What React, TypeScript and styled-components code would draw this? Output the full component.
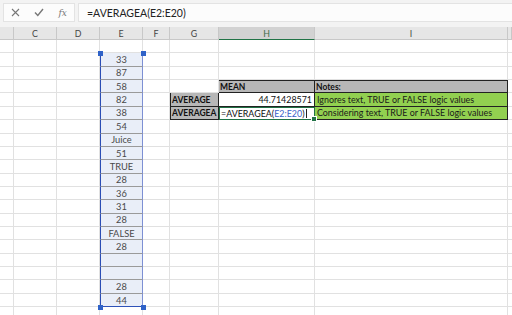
import { FC, ReactNode } from "react";
import styled, { createGlobalStyle } from "styled-components";

const GlobalStyle = createGlobalStyle`
  html, body {
    margin: 0;
    padding: 0;
    background: #ffffff;
    overflow: hidden;
  }
  body {
    font-family: Lato, "Open Sans", sans-serif;
  }
`;

const ROW_H = 13.37;
const WIDTHS = [14, 43, 43, 43, 27, 49, 96, 193, 4];
const LETTERS = ["", "C", "D", "E", "F", "G", "H", "I", ""];

const Page = styled.div`
  width: 512px;
  height: 315px;
  overflow: hidden;
  position: relative;
`;

const Toolbar = styled.div`
  display: flex;
  gap: 3px;
  height: 27px;
  padding: 3px 0 0 3px;
  box-sizing: border-box;
  background: #f3f3f3;
`;

const IconBox = styled.div`
  display: flex;
  align-items: center;
  justify-content: space-around;
  width: 72px;
  height: 19px;
  background: #fcfcfc;
  border: 1px solid #e3e3e3;
  box-sizing: border-box;
`;

const FxGlyph = styled.span`
  font-family: "DejaVu Serif", serif;
  font-style: italic;
  font-size: 9px;
  color: #777;
`;

const FormulaInput = styled.div`
  flex: 1;
  height: 19px;
  display: flex;
  align-items: center;
  padding-left: 8px;
  background: #fcfcfc;
  border: 1px solid #e3e3e3;
  border-right: none;
  box-sizing: border-box;
  font-size: 10.5px;
  color: #222;
`;

const Grid = styled.div`
  position: relative;
`;

const Row = styled.div<{ $h: number }>`
  display: flex;
  height: ${(p) => p.$h}px;
`;

const HeaderCell = styled.div<{ $w: number; $active?: boolean }>`
  flex: 0 0 ${(p) => p.$w}px;
  box-sizing: border-box;
  display: flex;
  align-items: center;
  justify-content: center;
  font-size: 8.8px;
  color: ${(p) => (p.$active ? "#3d6b48" : "#444")};
  background: ${(p) => (p.$active ? "#d2d2d2" : "#e6e6e6")};
  border-right: 1px solid #c8c8c8;
  border-bottom: ${(p) => (p.$active ? "1px solid #217346" : "1px solid #c8c8c8")};
`;

type Kind = "plain" | "sel" | "head" | "note" | "value" | "edit";

const Cell = styled.div<{ $w: number; $kind: Kind; $last?: boolean; $bt?: boolean; $bl?: boolean }>`
  flex: 0 0 ${(p) => p.$w}px;
  box-sizing: border-box;
  display: flex;
  align-items: center;
  overflow: hidden;
  white-space: nowrap;
  font-size: 8.9px;
  padding: 0 2px;
  border-right: 1px solid #e1e1e1;
  border-bottom: 1px solid #e1e1e1;
  ${(p) => p.$bt && "border-top: 1px solid #222;"}
  ${(p) => p.$bl && "border-left: 1px solid #222;"}
  ${(p) =>
    p.$kind === "sel" &&
    `
    justify-content: center;
    background: #e9eef8;
    color: #4a4a4a;
    font-size: 9.3px;
    border-left: 1.5px solid #2a4db5;
    border-right: 1.5px solid #7d90d4;
    border-bottom: 1px solid ${p.$last ? "#2f52b8" : "#9a9a9a"};
  `}
  ${(p) =>
    p.$kind === "head" &&
    `
    background: #b7b7b7;
    font-weight: bold;
    font-size: 8.5px;
    padding: 0 1px;
    color: #111;
    border-right: 1px solid #222;
    border-bottom: 1px solid #222;
  `}
  ${(p) =>
    p.$kind === "note" &&
    `
    background: #92d050;
    color: #1a1a1a;
    border-right: 1px solid #222;
    border-bottom: 1px solid #222;
  `}
  ${(p) =>
    p.$kind === "value" &&
    `
    justify-content: flex-end;
    color: #111;
    border-right: 1px solid #222;
    border-bottom: 1px solid #222;
  `}
  ${(p) =>
    p.$kind === "edit" &&
    `
    position: relative;
    overflow: visible;
    color: #111;
    border: 1.5px solid #217346;
    padding-left: 1px;
  `}
`;

const RangeRef = styled.span`
  color: #3a5fc8;
`;

const Caret = styled.span`
  display: inline-block;
  width: 1px;
  height: 9px;
  margin-left: 1px;
  background: #222;
`;

const FillHandle = styled.div`
  position: absolute;
  right: -3px;
  bottom: -3px;
  width: 4px;
  height: 4px;
  background: #217346;
  border: 1px solid #fff;
`;

const Handle = styled.div<{ $x: number; $y: number }>`
  position: absolute;
  left: ${(p) => p.$x - 2.5}px;
  top: ${(p) => p.$y - 2.5}px;
  width: 5px;
  height: 5px;
  background: #2f62c8;
`;

const ColumnE = [
  "33", "87", "58", "82", "38", "54", "Juice", "51", "TRUE", "28",
  "36", "31", "28", "FALSE", "28", "", "", "28", "44",
];

type CellSpec = { kind: Kind; text?: ReactNode; bt?: boolean; bl?: boolean };

const specFor = (row: number, col: number): CellSpec => {
  if (col === 3 && row >= 2 && row <= 20) {
    return { kind: "sel", text: ColumnE[row - 2] };
  }
  if (row === 4 && col === 6) return { kind: "head", text: "MEAN", bt: true };
  if (row === 4 && col === 7) return { kind: "head", text: "Notes:", bt: true };
  if (row === 5 && col === 5) return { kind: "head", text: "AVERAGE", bl: true };
  if (row === 6 && col === 5) return { kind: "head", text: "AVERAGEA", bl: true };
  if (row === 5 && col === 6) return { kind: "value", text: "44.71428571" };
  if (row === 5 && col === 7)
    return { kind: "note", text: "Ignores text, TRUE or FALSE logic values" };
  if (row === 6 && col === 7)
    return { kind: "note", text: "Considering text, TRUE or FALSE logic values" };
  if (row === 6 && col === 6)
    return {
      kind: "edit",
      text: (
        <>
          =AVERAGEA(<RangeRef>E2:E20</RangeRef>)<Caret />
          <FillHandle />
        </>
      ),
    };
  return { kind: "plain" };
};

const CrossIcon: FC = () => (
  <svg width="9" height="9" viewBox="0 0 9 9">
    <path d="M1 1 L8 8 M8 1 L1 8" stroke="#777" strokeWidth="1.1" fill="none" />
  </svg>
);

const CheckIcon: FC = () => (
  <svg width="10" height="9" viewBox="0 0 10 9">
    <path d="M1 4.5 L3.8 7.5 L9 1" stroke="#777" strokeWidth="1.4" fill="none" />
  </svg>
);

const Sheet: FC = () => {
  const rows = Array.from({ length: 21 }, (_, i) => i + 1);
  const top = 13;
  const eLeft = 100;
  const eRight = 143;
  return (
    <Grid>
      <Row $h={13}>
        {WIDTHS.map((w, i) => (
          <HeaderCell key={i} $w={w} $active={i === 6}>
            {LETTERS[i]}
          </HeaderCell>
        ))}
      </Row>
      {rows.map((r) => (
        <Row key={r} $h={ROW_H}>
          {WIDTHS.map((w, c) => {
            const s = specFor(r, c);
            return (
              <Cell key={c} $w={w} $kind={s.kind} $last={r === 20} $bt={s.bt} $bl={s.bl}>
                {s.text}
              </Cell>
            );
          })}
        </Row>
      ))}
      <Handle $x={eLeft} $y={top + ROW_H} />
      <Handle $x={eRight} $y={top + ROW_H} />
      <Handle $x={eLeft} $y={top + ROW_H * 20} />
      <Handle $x={eRight} $y={top + ROW_H * 20} />
    </Grid>
  );
};

const App: FC = () => (
  <Page>
    <GlobalStyle />
    <Toolbar>
      <IconBox>
        <CrossIcon />
        <CheckIcon />
        <FxGlyph>fx</FxGlyph>
      </IconBox>
      <FormulaInput>=AVERAGEA(E2:E20)</FormulaInput>
    </Toolbar>
    <Sheet />
  </Page>
);

export default App;
